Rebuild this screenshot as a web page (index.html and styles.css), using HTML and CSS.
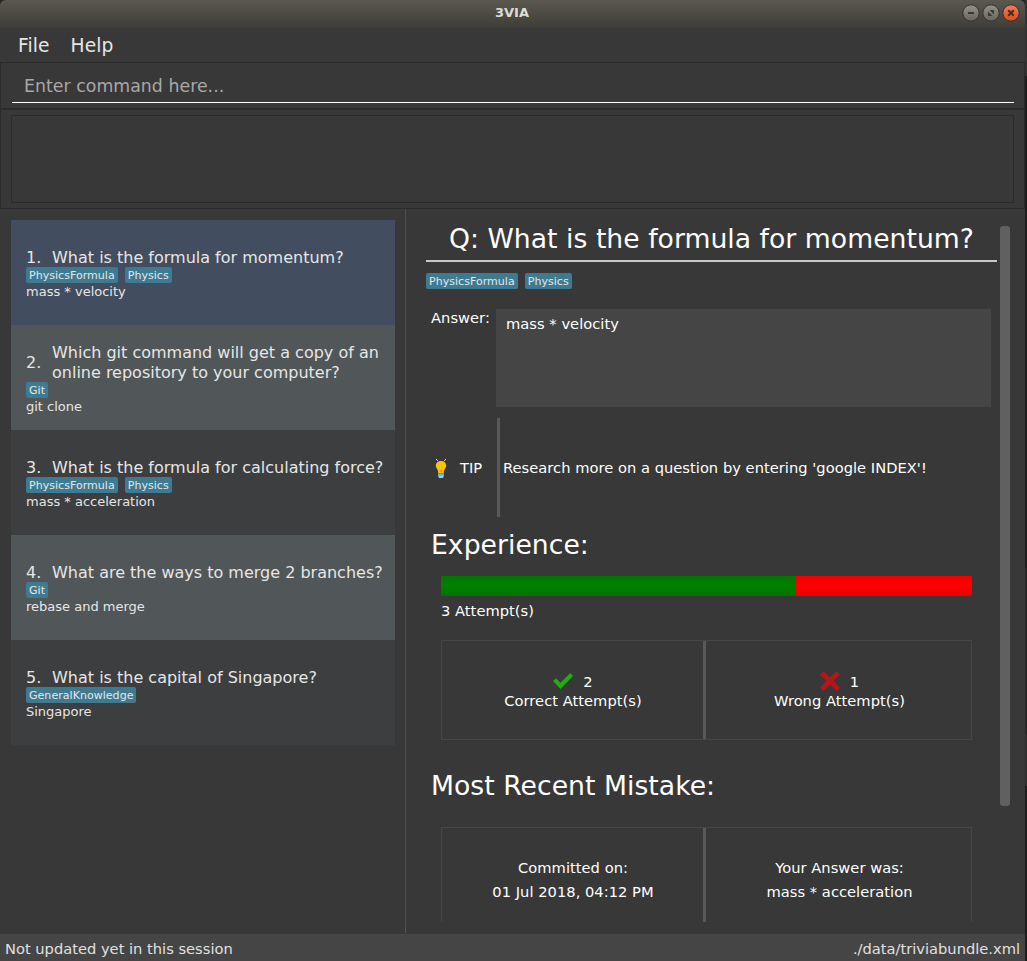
FILE: index.html
```html
<!DOCTYPE html>
<html lang="en">
<head>
<meta charset="utf-8">
<title>3VIA</title>
<link rel="stylesheet" href="styles.css">
</head>
<body>
<div class="desktop">
<div class="window">
  <header class="titlebar">
    <span class="title">3VIA</span>
    <div class="controls">
      <svg width="18" height="18" viewBox="0 0 18 18"><defs><linearGradient id="g" x1="0" y1="0" x2="0" y2="1"><stop offset="0" stop-color="#94928b"/><stop offset="1" stop-color="#66645d"/></linearGradient><linearGradient id="o" x1="0" y1="0" x2="0" y2="1"><stop offset="0" stop-color="#f37c5a"/><stop offset="1" stop-color="#df4a16"/></linearGradient></defs><circle cx="9" cy="9" r="8.2" fill="url(#g)" stroke="#33322d"/><path d="M6 9h6" stroke="#3a3934" stroke-width="2"/></svg>
      <svg width="18" height="18" viewBox="0 0 18 18"><circle cx="9" cy="9" r="8.2" fill="url(#g)" stroke="#33322d"/><path d="M7.500 6H12v4.500zM6 7.500V12h4.500z" fill="#3a3934"/></svg>
      <svg width="18" height="18" viewBox="0 0 18 18"><circle cx="9" cy="9" r="8.2" fill="url(#o)" stroke="#33322d"/><path d="M6.200 6.200l5.600 5.600M11.800 6.200l-5.600 5.600" stroke="#3a3023" stroke-width="2"/></svg>
    </div>
  </header>
  <nav class="menubar"><span>File</span><span>Help</span></nav>
  <section class="command"><div class="field">Enter command here...</div></section>
  <section class="result"><div class="result-box"></div></section>
  <main class="main">
    <aside class="list">
      <article class="card selected">
        <div class="question"><span class="num">1.</span><span>What is the formula for momentum?</span></div>
        <div class="tags"><span class="tag">PhysicsFormula</span><span class="tag">Physics</span></div>
        <div class="answer">mass * velocity</div>
      </article>
      <article class="card light">
        <div class="question"><span class="num">2.</span><span>Which git command will get a copy of an online repository to your computer?</span></div>
        <div class="tags"><span class="tag">Git</span></div>
        <div class="answer">git clone</div>
      </article>
      <article class="card">
        <div class="question"><span class="num">3.</span><span>What is the formula for calculating force?</span></div>
        <div class="tags"><span class="tag">PhysicsFormula</span><span class="tag">Physics</span></div>
        <div class="answer">mass * acceleration</div>
      </article>
      <article class="card light">
        <div class="question"><span class="num">4.</span><span>What are the ways to merge 2 branches?</span></div>
        <div class="tags"><span class="tag">Git</span></div>
        <div class="answer">rebase and merge</div>
      </article>
      <article class="card">
        <div class="question"><span class="num">5.</span><span>What is the capital of Singapore?</span></div>
        <div class="tags"><span class="tag">GeneralKnowledge</span></div>
        <div class="answer">Singapore</div>
      </article>
    </aside>
    <section class="detail">
      <div class="content">
        <h1 class="heading">Q: What is the formula for momentum?</h1>
        <div class="tags detail-tags"><span class="tag">PhysicsFormula</span><span class="tag">Physics</span></div>
        <div class="answer-row"><span class="label">Answer:</span><div class="answer-box">mass * velocity</div></div>
        <div class="tip">
          <div class="tip-label">
            <svg width="14" height="20" viewBox="0 0 14 20"><path d="M2 1l1.800 1.800M12 1l-1.800 1.800" stroke="#ffe08a"/><path d="M7 3C4 3 1.800 5 1.800 7.800c0 2.500 2.400 3.200 2.400 7.200h5.600c0-4 2.400-4.700 2.400-7.200C12.200 5 10 3 7 3z" fill="#ffc107"/><path d="M6 12h2v2H6z" fill="#ff9800"/><path d="M4 15.500h6v2L9 20H5l-1-2.500z" fill="#90d4f0"/><path d="M4 17h6" stroke="#4a9cc0"/></svg>
            <span>TIP</span>
          </div>
          <div class="tip-text">Research more on a question by entering 'google INDEX'!</div>
        </div>
        <h2 class="section-title">Experience:</h2>
        <div class="bar"><div class="bar-fill"></div></div>
        <div class="attempts">3 Attempt(s)</div>
        <div class="panel">
          <div class="cell">
            <div class="score"><svg width="20" height="20" viewBox="0 0 20 20"><path d="M0 10L3 7.200 7.500 11.800 17.300 2 20 4.900 7.500 18z" fill="#1daf0e"/></svg><span>2</span></div>
            <div>Correct Attempt(s)</div>
          </div>
          <div class="cell">
            <div class="score"><svg width="20" height="20" viewBox="0 0 20 20"><path d="M3.500 0L10 6.500 16.500 0 20 3.500 13.500 10 20 16.500 16.500 20 10 13.500 3.500 20 0 16.500 6.500 10 0 3.500z" fill="#b3161b"/></svg><span>1</span></div>
            <div>Wrong Attempt(s)</div>
          </div>
        </div>
        <h2 class="section-title mistake">Most Recent Mistake:</h2>
        <div class="panel recent">
          <div class="cell"><div>Committed on:</div><div>01 Jul 2018, 04:12 PM</div></div>
          <div class="cell"><div>Your Answer was:</div><div>mass * acceleration</div></div>
        </div>
      </div>
      <div class="scroll"><div class="thumb"></div></div>
    </section>
  </main>
  <footer class="status"><span>Not updated yet in this session</span><span>./data/triviabundle.xml</span></footer>
</div>
<div class="edge"></div>
</div>
</body>
</html>
```
FILE: styles.css
```css
* { box-sizing: border-box; }
body { margin: 0; background: #262626; font-family: "DejaVu Sans", sans-serif; color: #fff; white-space: nowrap; }
.desktop { display: flex; width: 1027px; height: 961px; overflow: hidden; }
.window { width: 1025px; height: 961px; display: flex; flex-direction: column; background: #383838; border-radius: 6px 6px 0 0; overflow: hidden; }
.edge { width: 2px; background: linear-gradient(#333 0 76px, #1d1d1d 76px 568px, #292929 568px 734px, #303030 734px 786px, #1d1d1d 786px); }
.titlebar { height: 28px; flex: none; display: grid; grid-template-columns: 1fr auto 1fr; align-items: center; background: linear-gradient(#5b5850, #3e3d37); font-size: 13px; font-weight: bold; color: #dfdbd2; }
.title { grid-column: 2; line-height: 26px; height: 28px; margin-right: 1px; }
.controls { justify-self: end; display: flex; gap: 2px; padding: 0 5px 2px 0; }
.menubar { height: 34px; flex: none; display: flex; gap: 21px; padding-left: 18px; font-size: 18.67px; letter-spacing: .08px; line-height: 35px; color: #e6e6e6; }
.command { height: 47px; flex: none; border: 1px solid #2b2b2b; padding: 5px 10px 0 11px; }
.field { height: 35px; border-bottom: 1px solid #fff; padding-left: 12px; font-size: 17.33px; letter-spacing: .03px; line-height: 36px; color: #a8a8a8; }
.result { height: 100px; flex: none; border: 1px solid #2b2b2b; padding: 5px 10px; }
.result-box { height: 88px; border: 1px solid #2b2b2b; }
.main { height: 725px; flex: none; display: flex; }
.list { width: 406px; height: 724px; border-right: 1px solid #505050; padding: 11px 10px 0 11px; }
.card { height: 105px; padding: 2px 10px 0 15px; display: flex; flex-direction: column; justify-content: center; background: #3c3e3f; color: #e6e6e6; }
.card.light { background: #515658; }
.card.selected { background: #424d5f; }
.question { display: flex; align-items: center; margin: 1px 0 -1px; font-size: 16px; line-height: 20px; }
.question span:last-child { white-space: normal; width: 336px; flex: none; }
.num { width: 26px; flex: none; }
.tags { display: flex; gap: 7px; }
.tag { height: 16px; padding: 0 3px; border-radius: 2px; background: #3e7b91; font-size: 11px; letter-spacing: .04px; line-height: 17px; color: #e6e6e6; }
.answer { font-size: 13px; line-height: 17px; }
.detail { flex: 1; display: flex; min-width: 0; }
.content { width: 571px; height: 713px; margin-left: 20px; overflow: hidden; font-size: 14.67px; letter-spacing: .03px; }
.heading, .section-title { margin: 0; font-size: 26.67px; font-weight: normal; letter-spacing: .02px; }
.heading { height: 53px; border-bottom: 2px solid #c8c8c8; line-height: 58px; text-align: center; padding-top: 1px; }
.detail-tags { margin-top: 11px; }
.answer-row { display: flex; margin-top: 20px; }
.label { width: 70px; padding-left: 5px; line-height: 17px; }
.answer-box { width: 495px; height: 98px; background: #454545; padding: 6px 10px; line-height: 18px; }
.tip { display: flex; height: 99px; margin-top: 11px; align-items: center; }
.tip-label { display: flex; align-items: center; gap: 12px; width: 71px; padding-left: 8px; }
.tip-text { height: 99px; border-left: 3px solid #595959; padding-left: 3px; line-height: 99px; }
.section-title { margin-top: 12px; padding-left: 5px; line-height: 32px; }
.bar { width: 531px; height: 20px; margin: 15px 0 0 15px; border-radius: 2px; overflow: hidden; background: linear-gradient(#f20000, #f00 50%, #eb0000); }
.bar-fill { width: 355px; height: 20px; border-radius: 0 2px 2px 0; background: linear-gradient(#007800, #008000 50%, #007400); }
.attempts { margin: 6px 0 0 15px; line-height: 18px; }
.panel { width: 531px; height: 100px; margin: 20px 0 0 15px; border: 1px solid #464646; display: grid; grid-template-columns: 264px 265px; text-align: center; }
.cell { display: flex; flex-direction: column; justify-content: center; padding: 1px 0 0 1px; line-height: 19px; }
.cell:first-child { border-right: 3px solid #595959; }
.cell:last-child { padding-left: 2px; }
.score { display: flex; justify-content: center; align-items: center; gap: 10px; height: 20px; }
.score span { padding-top: 1px; }
.mistake { margin-top: 30px; }
.recent { margin-top: 25px; height: 105px; }
.recent .cell { line-height: 24px; }
.scroll { width: 10px; margin: 17px 0 0 3px; }
.thumb { height: 580px; border-radius: 3px; background: #606060; }
.status { height: 27px; flex: none; display: flex; justify-content: space-between; padding: 0 5px; background: #454545; font-size: 14.67px; line-height: 29px; color: #e0e0e0; }
```
